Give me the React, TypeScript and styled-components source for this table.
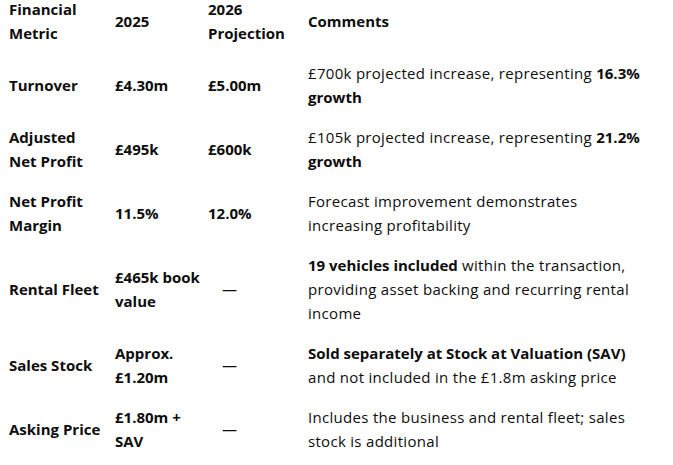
import styled, { createGlobalStyle } from "styled-components";

const GlobalStyle = createGlobalStyle`
  html, body {
    margin: 0;
    padding: 0;
    background: #fff;
  }
  body {
    font-family: "Open Sans", "Liberation Sans", sans-serif;
    color: #0d0d0d;
  }
`;

type Part = { text: string; bold?: boolean };

interface RowData {
  metric: string;
  current: string;
  projection: string;
  comment: Part[];
}

const rows: RowData[] = [
  {
    metric: "Turnover",
    current: "£4.30m",
    projection: "£5.00m",
    comment: [
      { text: "£700k projected increase, representing " },
      { text: "16.3% growth", bold: true },
    ],
  },
  {
    metric: "Adjusted Net Profit",
    current: "£495k",
    projection: "£600k",
    comment: [
      { text: "£105k projected increase, representing " },
      { text: "21.2% growth", bold: true },
    ],
  },
  {
    metric: "Net Profit Margin",
    current: "11.5%",
    projection: "12.0%",
    comment: [{ text: "Forecast improvement demonstrates increasing profitability" }],
  },
  {
    metric: "Rental Fleet",
    current: "£465k book value",
    projection: "—",
    comment: [
      { text: "19 vehicles included", bold: true },
      { text: " within the transaction, providing asset backing and recurring rental income" },
    ],
  },
  {
    metric: "Sales Stock",
    current: "Approx. £1.20m",
    projection: "—",
    comment: [
      { text: "Sold separately at Stock at Valuation (SAV)", bold: true },
      { text: " and not included in the £1.8m asking price" },
    ],
  },
  {
    metric: "Asking Price",
    current: "£1.80m + SAV",
    projection: "—",
    comment: [{ text: "Includes the business and rental fleet; sales stock is additional" }],
  },
];

const App = () => {
  return (
    <>
      <GlobalStyle />
      <Table>
        <Row>
          <HeadCell $pad={10}>Financial Metric</HeadCell>
          <HeadCell>2025</HeadCell>
          <HeadCell>2026 Projection</HeadCell>
          <HeadCell>Comments</HeadCell>
        </Row>
        {rows.map((row) => (
          <Row key={row.metric}>
            <Cell $bold $pad={10}>{row.metric}</Cell>
            <Cell $bold>{row.current}</Cell>
            {row.projection === "—" ? (
              <Dash>{row.projection}</Dash>
            ) : (
              <Cell $bold>{row.projection}</Cell>
            )}
            <Cell $pad={0}>
              {row.comment.map((part, i) =>
                part.bold ? <strong key={i}>{part.text}</strong> : <span key={i}>{part.text}</span>
              )}
            </Cell>
          </Row>
        ))}
      </Table>
    </>
  );
};

const Table = styled.div`
  display: flex;
  flex-direction: column;
  padding-left: 9px;
  margin-top: -11px;
`;

const Row = styled.div`
  display: grid;
  grid-template-columns: 106px 93px 100px 346px;
  align-items: center;
  padding: 8px 0;
`;

const HeadCell = styled.div<{ $pad?: number }>`
  font-size: 15px;
  font-weight: 700;
  line-height: 24px;
  padding-right: ${(p) => p.$pad ?? 4}px;
`;

const Cell = styled.div<{ $bold?: boolean; $pad?: number }>`
  font-size: 15px;
  font-weight: ${(p) => (p.$bold ? 700 : 400)};
  letter-spacing: ${(p) => (p.$bold ? "0" : "0.3px")};
  line-height: 24px;
  padding-right: ${(p) => p.$pad ?? 4}px;

  strong {
    font-weight: 700;
    letter-spacing: 0;
  }
`;

const Dash = styled.div`
  font-size: 15px;
  line-height: 24px;
  padding-left: 14px;
`;

export default App;
